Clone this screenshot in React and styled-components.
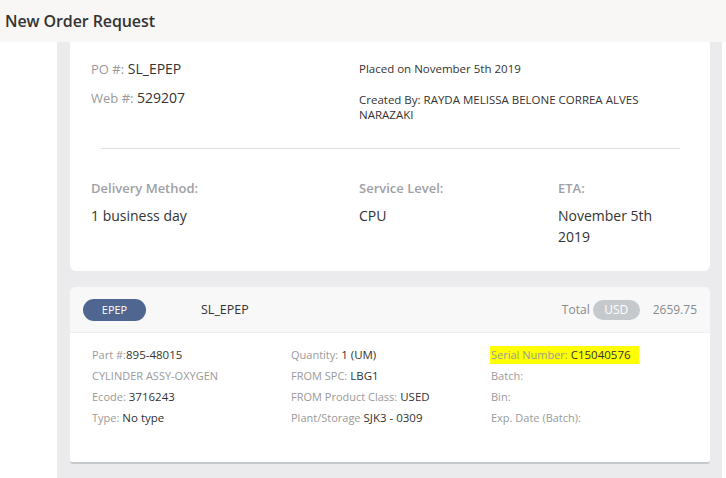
import React from "react";
import styled, { createGlobalStyle } from "styled-components";

const GlobalStyle = createGlobalStyle`
  html, body {
    margin: 0;
    padding: 0;
    background: #ffffff;
    font-family: "Open Sans", "Noto Sans", sans-serif;
    color: #333333;
    overflow: hidden;
  }
`;

const Page = styled.div`
  width: 726px;
  height: 478px;
  display: flex;
  flex-direction: column;
`;

const Header = styled.div`
  height: 42px;
  flex: 0 0 42px;
  background: #f8f7f5;
  display: flex;
  align-items: center;
  padding-left: 5px;
  box-sizing: border-box;
`;

const Title = styled.h1`
  margin: 0;
  font-size: 16px;
  font-weight: 600;
  color: #333333;
  letter-spacing: -0.1px;
`;

const Main = styled.div`
  flex: 1;
  display: flex;
  padding: 0 4px 0 57px;
  overflow: hidden;
`;

const Panel = styled.div`
  flex: 1;
  background: #ebebed;
  padding: 0 12px 0 13px;
  display: flex;
  flex-direction: column;
`;

const OrderCard = styled.div`
  background: #ffffff;
  border-radius: 0 0 6px 6px;
  padding: 17px 21px 24px;
`;

const InfoGrid = styled.div`
  display: grid;
  grid-template-columns: ${(p) => p.$cols};
`;

const Stack = styled.div`
  display: flex;
  flex-direction: column;
  gap: ${(p) => p.$gap || 0}px;
`;

const Line = styled.div`
  font-size: 14px;
  line-height: 20px;
  color: #333;
`;

const Label = styled.span`
  color: #9a9a9a;
  font-size: 13px;
`;

const SmallText = styled.div`
  font-size: 11.5px;
  line-height: ${(p) => p.$lh || 20}px;
  color: #333;
`;

const Divider = styled.hr`
  border: none;
  border-top: 1px solid #dddddd;
  margin: 26px 9px 30px 10px;
`;

const FieldLabel = styled.div`
  font-size: 13px;
  font-weight: 600;
  color: #a0a0a6;
  line-height: 18px;
  margin-bottom: 8px;
`;

const FieldValue = styled.div`
  font-size: 14px;
  line-height: 21px;
  color: #333;
  padding-right: ${(p) => p.$pr || 0}px;
`;

const ItemCard = styled.div`
  margin-top: 16px;
  background: #ffffff;
  border-radius: 6px 6px 3px 3px;
  border-bottom: 2px solid #c5c9cb;
  overflow: hidden;
`;

const ItemHeader = styled.div`
  height: 45px;
  background: #f8f8f8;
  border-bottom: 1px solid #eeeeee;
  display: flex;
  align-items: center;
  padding: 0 13px;
`;

const Pill = styled.span`
  display: inline-flex;
  align-items: center;
  justify-content: center;
  width: ${(p) => p.$w}px;
  height: ${(p) => p.$h}px;
  border-radius: ${(p) => p.$h / 2}px;
  background: ${(p) => p.$bg};
  color: #ffffff;
  font-size: ${(p) => p.$fs}px;
`;

const ItemRef = styled.span`
  margin-left: 55px;
  font-size: 12.5px;
  color: #333;
`;

const TotalBox = styled.div`
  margin-left: auto;
  display: flex;
  align-items: center;
  gap: 3px;
  font-size: 12px;
  color: #8a8a8a;
`;

const Amount = styled.span`
  margin-left: 10px;
`;

const ItemBody = styled.div`
  display: grid;
  grid-template-columns: 199px 200px 1fr;
  padding: 11px 22px 34px;
`;

const Row = styled.div`
  font-size: 11.5px;
  line-height: 21px;
  color: #333;
  white-space: nowrap;
`;

const Muted = styled.span`
  color: #9a9a9a;
  font-size: 11px;
`;

const Highlight = styled.span`
  background: #ffff00;
  display: inline-block;
  line-height: 17px;
  padding: 0 8px 1px 1px;
  margin-left: -1px;
`;

export default function App() {
  return (
    <Page>
      <GlobalStyle />
      <Header>
        <Title>New Order Request</Title>
      </Header>
      <Main>
        <Panel>
          <OrderCard>
            <InfoGrid $cols="268px 1fr">
              <Stack $gap={9}>
                <Line>
                  <Label>PO #:</Label> SL_EPEP
                </Line>
                <Line>
                  <Label>Web #:</Label> 529207
                </Line>
              </Stack>
              <Stack $gap={13}>
                <SmallText>Placed on November 5th 2019</SmallText>
                <SmallText $lh={15}>
                  Created By: RAYDA MELISSA BELONE CORREA ALVES NARAZAKI
                </SmallText>
              </Stack>
            </InfoGrid>
            <Divider />
            <InfoGrid $cols="268px 199px 1fr">
              <div>
                <FieldLabel>Delivery Method:</FieldLabel>
                <FieldValue>1 business day</FieldValue>
              </div>
              <div>
                <FieldLabel>Service Level:</FieldLabel>
                <FieldValue>CPU</FieldValue>
              </div>
              <div>
                <FieldLabel>ETA:</FieldLabel>
                <FieldValue $pr={20}>November 5th 2019</FieldValue>
              </div>
            </InfoGrid>
          </OrderCard>

          <ItemCard>
            <ItemHeader>
              <Pill $w={63} $h={22} $bg="#4e6690" $fs={11}>
                EPEP
              </Pill>
              <ItemRef>SL_EPEP</ItemRef>
              <TotalBox>
                Total
                <Pill $w={47} $h={20} $bg="#c5c9cc" $fs={12}>
                  USD
                </Pill>
                <Amount>2659.75</Amount>
              </TotalBox>
            </ItemHeader>
            <ItemBody>
              <div>
                <Row>
                  <Muted>Part #:</Muted>895-48015
                </Row>
                <Row>
                  <Muted>CYLINDER ASSY-OXYGEN</Muted>
                </Row>
                <Row>
                  <Muted>Ecode:</Muted> 3716243
                </Row>
                <Row>
                  <Muted>Type:</Muted> No type
                </Row>
              </div>
              <div>
                <Row>
                  <Muted>Quantity:</Muted> 1 (UM)
                </Row>
                <Row>
                  <Muted>FROM SPC:</Muted> LBG1
                </Row>
                <Row>
                  <Muted>FROM Product Class:</Muted> USED
                </Row>
                <Row>
                  <Muted>Plant/Storage</Muted> SJK3 - 0309
                </Row>
              </div>
              <div>
                <Row>
                  <Highlight>
                    <Muted>Serial Number:</Muted> C15040576
                  </Highlight>
                </Row>
                <Row>
                  <Muted>Batch:</Muted>
                </Row>
                <Row>
                  <Muted>Bin:</Muted>
                </Row>
                <Row>
                  <Muted>Exp. Date (Batch):</Muted>
                </Row>
              </div>
            </ItemBody>
          </ItemCard>
        </Panel>
      </Main>
    </Page>
  );
}
